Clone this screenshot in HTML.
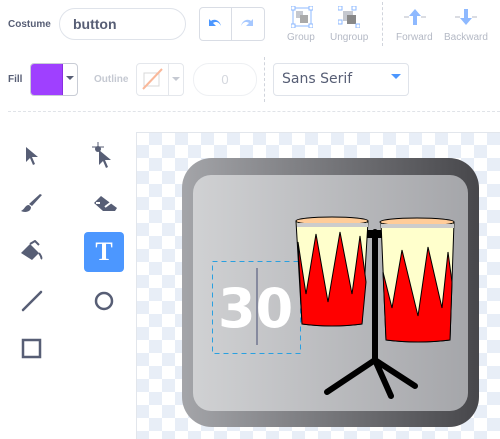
<!DOCTYPE html>
<html><head><style>
body{margin:0;width:500px;height:439px;background:#fff;font-family:"Liberation Sans",sans-serif;position:relative;overflow:hidden}
.a{position:absolute}
.lbl{font-size:10px;font-weight:bold;color:#575e75}
.sm{font-size:10px;color:#b4b9c5}
</style></head><body>
<div class="a lbl" style="left:8px;top:19px">Costume</div>
<div class="a" style="left:59px;top:8px;width:125px;height:30px;border:1px solid #dfe3ea;border-radius:16px;font-size:14px;color:#575e75;line-height:30px;text-indent:13px;font-weight:bold">button</div>
<div class="a" style="left:199px;top:7px;width:64px;height:32px;border:1px solid #d9dde5;border-radius:4px"></div>
<div class="a" style="left:231px;top:7px;width:1px;height:34px;background:#d9dde5"></div>
<svg class="a" style="left:207px;top:16px" width="16" height="14"><path d="M2 3v7h7L6 7c3-2 6-1 8 3-1-5-6-8-10-5z" fill="#4c97ff"/></svg>
<svg class="a" style="left:239px;top:16px" width="16" height="14"><path d="M14 3v7H7l3-3c-3-2-6-1-8 3 1-5 6-8 10-5z" fill="#a6c8ff"/></svg>
<svg class="a" style="left:291px;top:6px" width="22" height="22"><rect x="2" y="2" width="18" height="18" fill="none" stroke="#8eb9ff" stroke-width="1"/><rect x="5" y="5" width="7" height="7" fill="#c5c8cf"/><rect x="9" y="9" width="8" height="8" fill="#aaa"/><g fill="#fff" stroke="#8eb9ff"><rect x="0" y="0" width="4" height="4"/><rect x="18" y="0" width="4" height="4"/><rect x="0" y="18" width="4" height="4"/><rect x="18" y="18" width="4" height="4"/></g></svg>
<div class="a sm" style="left:287px;top:32px">Group</div>
<svg class="a" style="left:338px;top:6px" width="22" height="22"><rect x="5" y="5" width="10" height="10" fill="#c5c8cf"/><rect x="9" y="9" width="9" height="9" fill="#888"/><g fill="#fff" stroke="#8eb9ff"><rect x="0" y="0" width="4" height="4"/><rect x="14" y="0" width="4" height="4"/><rect x="0" y="14" width="4" height="4"/><rect x="18" y="18" width="4" height="4"/></g></svg>
<div class="a sm" style="left:330px;top:32px">Ungroup</div>
<div class="a" style="left:382px;top:2px;height:44px;border-left:1px dashed #d0d4dc"></div>
<svg class="a" style="left:404px;top:8px" width="22" height="18"><path d="M11 1l6 7h-4v9H9V8H5z" fill="#8eb9ff"/><path d="M0 9h5M17 9h5" stroke="#b4b9c5"/></svg>
<div class="a sm" style="left:396px;top:32px">Forward</div>
<svg class="a" style="left:455px;top:8px" width="22" height="18"><path d="M11 17l6-7h-4V1H9v9H5z" fill="#8eb9ff"/><path d="M0 9h5M17 9h5" stroke="#b4b9c5"/></svg>
<div class="a sm" style="left:444px;top:32px">Backward</div>

<div class="a lbl" style="left:8px;top:74px">Fill</div>
<div class="a" style="left:30px;top:63px;width:46px;height:31px;border:1px solid #c9cdd6;border-radius:4px;overflow:hidden"><div style="width:31px;height:31px;background:#9f40ff;border-right:1px solid #8a2fe0"></div></div>
<div class="a" style="left:66px;top:76px;border:4px solid transparent;border-top:4px solid #575e75"></div>
<div class="a lbl" style="left:94px;top:74px;color:#c5c9d2">Outline</div>
<div class="a" style="left:136px;top:63px;width:46px;height:31px;border:1px solid #e4e7ec;border-radius:4px"></div>
<div class="a" style="left:168px;top:63px;width:1px;height:33px;background:#e4e7ec"></div>
<svg class="a" style="left:140px;top:67px" width="24" height="24"><rect x="4" y="6" width="15" height="13" fill="none" stroke="#d8d8d8"/><path d="M3 22L22 2" stroke="#f9b89a" stroke-width="2"/></svg>
<div class="a" style="left:172px;top:77px;border:4px solid transparent;border-top:4px solid #c5c9d2"></div>
<div class="a" style="left:193px;top:63px;width:62px;height:31px;border:1px solid #eef0f3;border-radius:16px;text-align:center;line-height:31px;font-size:13px;color:#d4d7de">0</div>
<div class="a" style="left:264px;top:57px;height:45px;border-left:1px dashed #d0d4dc"></div>
<div class="a" style="left:273px;top:63px;width:134px;height:31px;border:1px solid #dfe3ea;border-radius:4px;font-size:14px;color:#575e75;line-height:31px;text-indent:8px;font-family:'DejaVu Sans',sans-serif">Sans Serif</div>
<div class="a" style="left:391px;top:74px;border:5px solid transparent;border-top:5px solid #4c97ff;border-bottom:0"></div>
<div class="a" style="left:8px;top:111px;width:492px;border-top:1px dashed #e0e3e8"></div>

<!-- tools -->
<svg class="a" style="left:24px;top:146px" width="16" height="20"><path d="M2 1l12 10-6 0 3 7-2 1-3-7-4 4z" fill="#575e75"/></svg>
<svg class="a" style="left:90px;top:142px" width="26" height="26"><path d="M9 8l12 10-6 0 3 7-2 1-3-7-4 4z" fill="#575e75"/><circle cx="8" cy="7" r="3" fill="#575e75"/><path d="M2 5h12M8 0v6" stroke="#575e75"/></svg>
<svg class="a" style="left:20px;top:193px" width="24" height="22"><path d="M22 2L12 13l-3-2L20 1z" fill="#575e75"/><path d="M9 12c-4 0-4 4-8 6 4 2 10 1 10-4z" fill="#575e75"/></svg>
<svg class="a" style="left:92px;top:194px" width="26" height="20"><path d="M9 2L2 9l9 8h12l2-3z" fill="#575e75"/><path d="M8 9l-4 0M13 13l8-6" stroke="#fff" stroke-width="2"/></svg>
<svg class="a" style="left:20px;top:240px" width="24" height="24"><path d="M1 13l9-9 9 9-7 7z" fill="#575e75"/><path d="M10 4l5-3 4 4" stroke="#575e75" stroke-width="2" fill="none"/><path d="M19 13c2 3 3 5 2 6" stroke="#575e75" stroke-width="2"/></svg>
<div class="a" style="left:84px;top:232px;width:40px;height:40px;background:#4c97ff;border-radius:4px;color:#fff;font:bold 26px 'Liberation Serif',serif;text-align:center;line-height:40px">T</div>
<svg class="a" style="left:20px;top:289px" width="24" height="24"><path d="M3 21L21 3" stroke="#575e75" stroke-width="2.5" stroke-linecap="round"/></svg>
<svg class="a" style="left:92px;top:289px" width="24" height="24"><circle cx="12" cy="12" r="8" fill="none" stroke="#575e75" stroke-width="2.5"/></svg>
<svg class="a" style="left:20px;top:337px" width="24" height="24"><rect x="3" y="3" width="17" height="17" fill="none" stroke="#575e75" stroke-width="2.5"/></svg>

<!-- canvas -->
<svg class="a" style="left:136px;top:132px" width="364" height="307">
<defs><pattern id="c" width="26" height="26" patternUnits="userSpaceOnUse"><rect width="26" height="26" fill="#fff"/><rect x="13" width="13" height="13" fill="#e8eef7"/><rect y="13" width="13" height="13" fill="#e8eef7"/></pattern>
<linearGradient id="o" x1="0" x2="1"><stop offset="0" stop-color="#a4a5a9"/><stop offset="1" stop-color="#47474b"/></linearGradient>
<linearGradient id="i" x1="0" x2="1"><stop offset="0" stop-color="#d0d1d3"/><stop offset="1" stop-color="#a5a6aa"/></linearGradient></defs>
<rect x="0.5" y="0.5" width="364" height="307" fill="url(#c)" stroke="#e2e6ec"/>
<rect x="46" y="26" width="297" height="269" rx="30" fill="url(#o)"/>
<rect x="57" y="43" width="275" height="236" rx="18" fill="url(#i)"/>
<rect x="76.5" y="129.5" width="88" height="92" fill="none" stroke="#29a0e0" stroke-dasharray="5,4"/>
<text x="82" y="195" font-family="DejaVu Sans,sans-serif" font-weight="bold" font-size="54" fill="#fff">30</text>
<line x1="121" y1="136" x2="121" y2="213" stroke="#707590" stroke-width="1.5"/>
<rect x="228" y="98" width="20" height="8" fill="#000"/>
<path d="M239 100V228L191 260M239 228L255 264M239 228L279 254" stroke="#000" stroke-width="6" stroke-linecap="round" fill="none"/>
<!-- left drum -->
<path d="M160 89h72l-6 103q-30 4-60 0z" fill="#ffffcc" stroke="#000"/>
<path d="M162 110L170 162L180 102L192 170L204 100L216 162L224 104L230 150L226 192q-30 4-60 0z" fill="#f00" stroke="#000"/>
<ellipse cx="196" cy="89" rx="36" ry="4" fill="#ffcc99" stroke="#000"/>
<rect x="161" y="91" width="71" height="4" fill="#ccc"/>
<!-- right drum -->
<path d="M245 90h73l-4 118q-32 4-64 0z" fill="#ffffcc" stroke="#000"/>
<path d="M247 140L256 176L266 118L282 184L292 115L306 176L312 120L316 150L314 208q-32 4-64 0z" fill="#f00" stroke="#000"/>
<ellipse cx="281" cy="90" rx="37" ry="4" fill="#ffcc99" stroke="#000"/>
<rect x="245" y="92" width="73" height="4" fill="#ccc"/>
</svg>
</body></html>
